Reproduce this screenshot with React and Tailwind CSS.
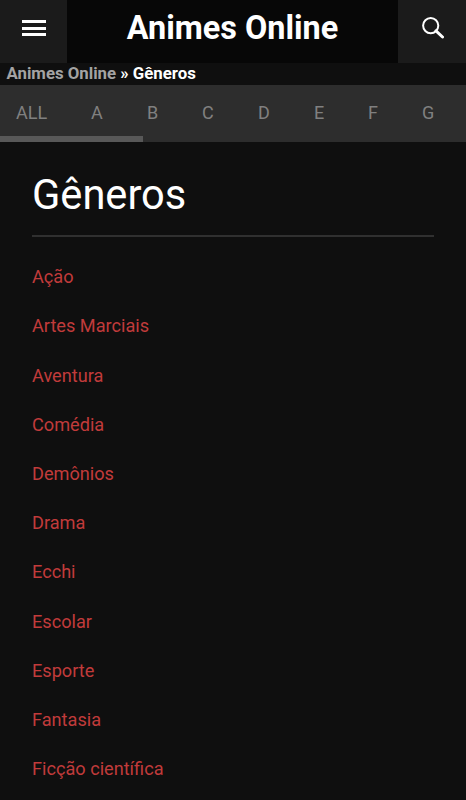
import React from "react";

const letters = [
  { label: "ALL", width: "w-[75px]" },
  { label: "A", width: "w-[56px]" },
  { label: "B", width: "w-[55px]" },
  { label: "C", width: "w-[56px]" },
  { label: "D", width: "w-[56px]" },
  { label: "E", width: "w-[54px]" },
  { label: "F", width: "w-[54px]" },
  { label: "G", width: "w-[44px]" },
];

const genres = [
  "Ação",
  "Artes Marciais",
  "Aventura",
  "Comédia",
  "Demônios",
  "Drama",
  "Ecchi",
  "Escolar",
  "Esporte",
  "Fantasia",
  "Ficção científica",
];

const Header = () => {
  return (
    <header className="flex h-[63px] bg-[#070707]">
      <button className="w-[67px] h-full bg-[#1b1b1b] flex flex-col items-center pt-[20px] gap-[3.5px]">
        <span className="w-6 h-[3px] bg-white" />
        <span className="w-6 h-[3px] bg-white" />
        <span className="w-6 h-[3px] bg-white" />
      </button>
      <h1 className="flex-1 text-center text-white font-bold text-[32.4px] leading-[56px] whitespace-nowrap">
        Animes Online
      </h1>
      <button className="w-[68px] h-full bg-[#1b1b1b] flex justify-center pt-[17px] pl-[2px]">
        <svg width="22" height="22" viewBox="0 0 22 22" fill="none" stroke="#fff">
          <circle cx="8.7" cy="8.6" r="7.6" strokeWidth="2" />
          <path d="M14 13.9L20.5 20" strokeWidth="3" strokeLinecap="round" />
        </svg>
      </button>
    </header>
  );
};

const App = () => {
  return (
    <div className="w-full h-[800px] overflow-hidden bg-[#0f0f0f] font-[Roboto,sans-serif]">
      <Header />

      <nav className="h-[22px] pl-[6.5px] text-[16.8px] leading-[21px] font-bold text-white">
        <span className="text-[#a3a3a3]">Animes Online</span> » Gêneros
      </nav>

      <div className="h-[57px] bg-[#2d2d2d] flex flex-col justify-between overflow-hidden">
        <div className="flex pl-[16px] text-lg leading-[56px] h-[51px] text-[#808080]">
          {letters.map((letter) => (
            <a key={letter.label} className={"shrink-0 " + letter.width}>
              {letter.label}
            </a>
          ))}
        </div>
        <div className="w-[143px] h-[6px] bg-[#585858]" />
      </div>

      <main className="px-8 pt-[24px]">
        <h2 className="text-white text-[41.6px] leading-[57px] h-[69px]">Gêneros</h2>
        <hr className="border-0 h-[2px] bg-[#303030]" />
        <ul className="pt-[15.2px]">
          {genres.map((genre) => (
            <li key={genre} className="h-[49.2px] leading-[49px] text-[18.15px] text-[#c13b3b]">
              {genre}
            </li>
          ))}
        </ul>
      </main>
    </div>
  );
};

export default App;
